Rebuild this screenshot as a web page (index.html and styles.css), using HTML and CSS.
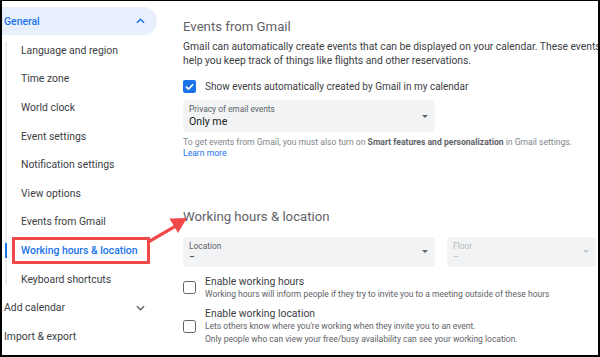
FILE: index.html
```html
<!DOCTYPE html>
<html>
<head>
<meta charset="utf-8">
<link rel="stylesheet" href="styles.css">
</head>
<body>
<div class="frame">
  <nav class="sidebar">
    <div class="nav-head active-head">
      <span>General</span>
      <svg class="chev" viewBox="0 0 10 6" width="9" height="6"><path d="M1 5 L5 1 L9 5" fill="none" stroke="#1a73e8" stroke-width="1.6"/></svg>
    </div>
    <ul class="nav-sub">
      <li>Language and region</li>
      <li>Time zone</li>
      <li>World clock</li>
      <li>Event settings</li>
      <li>Notification settings</li>
      <li>View options</li>
      <li>Events from Gmail</li>
      <li class="current"><span class="marked">Working hours &amp; location</span></li>
      <li>Keyboard shortcuts</li>
    </ul>
    <div class="nav-head">
      <span>Add calendar</span>
      <svg class="chev" viewBox="0 0 10 6" width="9" height="6"><path d="M1 1 L5 5 L9 1" fill="none" stroke="#5f6368" stroke-width="1.6"/></svg>
    </div>
    <div class="nav-head">
      <span>Import &amp; export</span>
    </div>
  </nav>

  <main class="main">
    <h2 class="section-title">Events from Gmail</h2>
    <p class="desc">Gmail can automatically create events that can be displayed on your calendar. These events will<br>help you keep track of things like flights and other reservations.</p>

    <label class="check-row">
      <span class="box checked"><svg viewBox="0 0 14 14" width="13" height="13"><path d="M3.2 7.2 L5.9 9.8 L10.9 4.6" fill="none" stroke="#fff" stroke-width="1.8"/></svg></span>
      <span class="check-label">Show events automatically created by Gmail in my calendar</span>
    </label>

    <div class="select wide">
      <div class="select-text">
        <span class="select-label">Privacy of email events</span>
        <span class="select-value">Only me</span>
      </div>
      <span class="caret"></span>
    </div>

    <p class="helper">To get events from Gmail, you must also turn on <b>Smart features and personalization</b> in Gmail settings.<br><a class="link">Learn more</a></p>

    <h2 class="section-title second">Working hours &amp; location</h2>

    <div class="select-row">
      <div class="select wide tight">
        <div class="select-text">
          <span class="select-label">Location</span>
          <span class="select-value dash">–</span>
        </div>
        <span class="caret"></span>
      </div>
      <div class="select narrow tight disabled">
        <div class="select-text">
          <span class="select-label">Floor</span>
          <span class="select-value dash">–</span>
        </div>
        <span class="caret"></span>
      </div>
    </div>

    <div class="option">
      <span class="box"></span>
      <div class="option-text">
        <div class="option-title">Enable working hours</div>
        <div class="option-sub">Working hours will inform people if they try to invite you to a meeting outside of these hours</div>
      </div>
    </div>
    <div class="option">
      <span class="box"></span>
      <div class="option-text">
        <div class="option-title">Enable working location</div>
        <div class="option-sub">Lets others know where you're working when they invite you to an event.</div>
        <div class="option-sub">Only people who can view your free/busy availability can see your working location.</div>
      </div>
    </div>
  </main>

  <svg class="annot-arrow" width="60" height="45" viewBox="0 0 60 45">
    <path d="M2 38 L27 23.5" stroke="#f0494a" stroke-width="3.2" fill="none" stroke-linecap="square"/>
    <path d="M39 15 L21.5 15.5 L30 30 Z" fill="#f0494a"/>
  </svg>
</div>
</body>
</html>
```

FILE: styles.css
```css
* { box-sizing: border-box; }
html, body { margin: 0; padding: 0; background: #fff; }
body { font-family: Roboto, "Noto Sans", Arial, sans-serif; color: #3c4043; }

.frame {
  position: relative;
  width: 600px;
  height: 357px;
  border-style: solid;
  border-color: #000;
  border-width: 1px 2px 2px 2px;
  display: flex;
  overflow: hidden;
  background: #fff;
}

.sidebar {
  width: 168px;
  flex: none;
  font-size: 10.4px;
}
.nav-head {
  height: 28.6px;
  display: flex;
  align-items: center;
  justify-content: space-between;
  padding: 0 12px 0 2px;
  width: 155px;
  color: #3c4043;
}
.active-head {
  margin-top: 6px;
  background: #e8f0fe;
  color: #1a73e8;
  font-weight: 500;
  border-radius: 0 14px 14px 0;
  height: 28px;
}
.chev { display: block; }

.nav-sub {
  list-style: none;
  margin: 1px 0 0 3px;
  padding: 0;
  position: relative;
}
.nav-sub::before {
  content: "";
  position: absolute;
  left: 0;
  top: 6px;
  bottom: 8px;
  width: 2px;
  background: #ebedef;
}
.nav-sub li {
  height: 28.6px;
  display: flex;
  align-items: center;
  padding-left: 16px;
  position: relative;
}
.nav-sub li.current { color: #1a73e8; font-weight: 500; }
.nav-sub li.current::before {
  content: "";
  position: absolute;
  left: 0;
  top: 7px;
  bottom: 7px;
  width: 2px;
  background: #1a73e8;
}
.marked {
  display: block;
  margin-left: -6px;
  padding: 4px 0 4px 6px;
  width: 132px;
  outline: 3px solid #f0494a;
}

.main {
  flex: none;
  width: 440px;
  padding: 17px 0 0 13px;
}
.section-title {
  margin: 0;
  font-size: 13.2px;
  line-height: 18px;
  font-weight: 400;
  color: #5f6368;
}
.section-title.second { margin-top: 48.5px; }
.desc {
  margin: 4px 0 0;
  font-size: 10.3px;
  line-height: 14px;
  white-space: nowrap;
  color: #3c4043;
}
.check-row {
  display: flex;
  align-items: center;
  height: 16px;
  margin-top: 10px;
  gap: 9px;
}
.box {
  width: 13px;
  height: 13px;
  border: 1.6px solid #5f6368;
  border-radius: 2.5px;
  flex: none;
  display: block;
}
.box.checked {
  background: #1a73e8;
  border: none;
  border-radius: 2px;
}
.box.checked svg { display: block; }
.check-label { font-size: 10px; color: #3c4043; }

.select {
  background: #f1f3f4;
  border-radius: 4px;
  height: 32px;
  display: flex;
  align-items: center;
  justify-content: space-between;
  padding: 0 7px 0 6px;
}
.select.wide { width: 252px; margin-top: 6px; }
.select.narrow { width: 149px; }
.select.tight { height: 30px; margin-top: 0; }
.select-text { display: flex; flex-direction: column; }
.select-label { font-size: 8.4px; line-height: 11px; color: #5f6368; }
.select-value { font-size: 10.6px; line-height: 13px; color: #202124; }
.select-value.dash { font-size: 9px; line-height: 11px; }
.caret {
  width: 0; height: 0;
  border-left: 3.5px solid transparent;
  border-right: 3.5px solid transparent;
  border-top: 3.5px solid #5f6368;
}
.select.disabled .select-label,
.select.disabled .select-value { color: #b4b7ba; }
.select.disabled .caret { border-top-color: #c4c7ca; }

.helper {
  margin: 5px 0 0;
  font-size: 8.6px;
  line-height: 11px;
  color: #80868b;
  white-space: nowrap;
}
.helper b { color: #5f6368; font-weight: 700; }
.link { color: #1a73e8; }

.select-row {
  display: flex;
  gap: 12px;
  margin-top: 11px;
}

.option {
  display: flex;
  align-items: center;
  gap: 9px;
  margin-top: 8px;
}
.option + .option { margin-top: 6px; }
.option-title { font-size: 10.4px; line-height: 13px; color: #3c4043; }
.option-sub { font-size: 8.5px; line-height: 13px; color: #5f6368; white-space: nowrap; }

.annot-arrow {
  position: absolute;
  left: 146px;
  top: 202px;
}
```
